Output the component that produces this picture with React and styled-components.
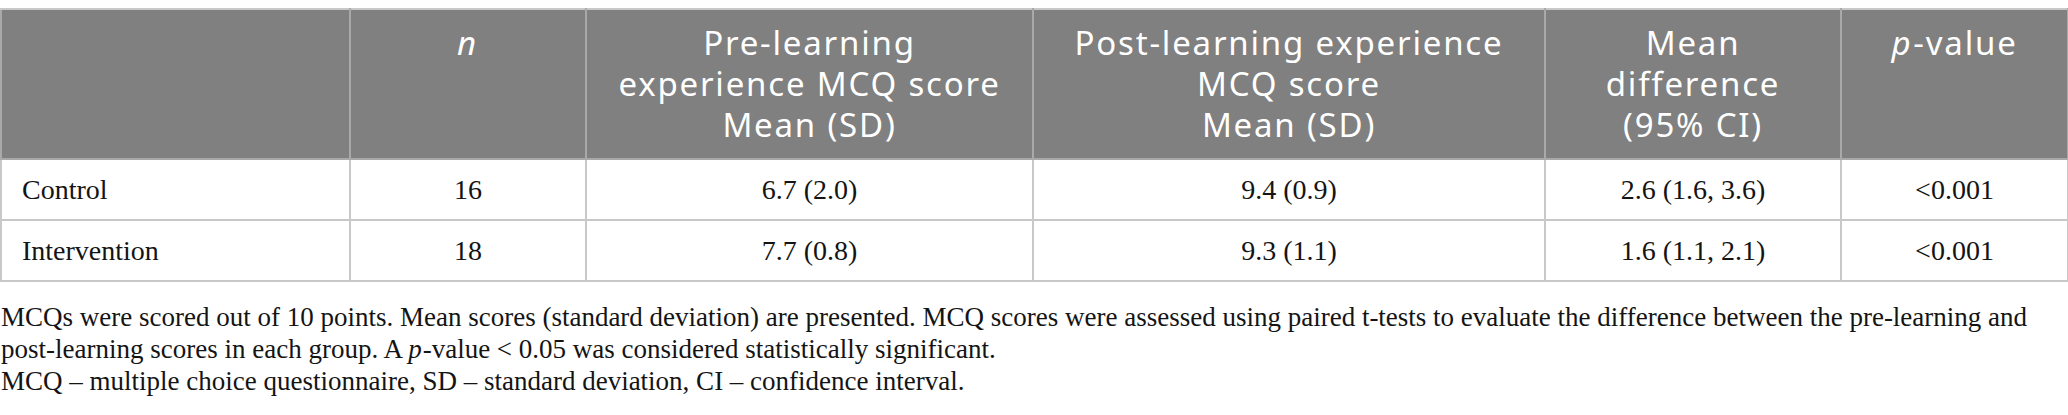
import React from "react"
import styled, { createGlobalStyle } from "styled-components"

const GlobalStyle = createGlobalStyle`
  body {
    margin: 0;
    background: #ffffff;
  }
`

const Wrapper = styled.div`
  width: 2067px;
  padding-top: 8px;
`

const Table = styled.table`
  width: 2067px;
  border-collapse: collapse;
  table-layout: fixed;
  border: 2px solid #c8c8c8;
`

const HeadCell = styled.th`
  background: #7f807f;
  color: #ffffff;
  font-family: "Noto Sans", "Open Sans", sans-serif;
  font-weight: 400;
  font-size: 33px;
  line-height: 41px;
  letter-spacing: 1.8px;
  text-align: center;
  vertical-align: top;
  padding: 12px 4px 0;
  height: 150px;
  box-sizing: border-box;
  border: 2px solid #a9a9a9;
  border-top-color: #c8c8c8;
`

const Cell = styled.td`
  font-family: "Liberation Serif", "Times New Roman", serif;
  font-size: 28px;
  color: #141414;
  text-align: ${(p) => (p.$left ? "left" : "center")};
  padding: 0 ${(p) => (p.$left ? "20px" : "8px")};
  height: 59px;
  vertical-align: middle;
  border: 2px solid #c8c8c8;
`

const Italic = styled.i`
  font-style: italic;
  padding-right: 1px;
`

const Footnote = styled.div`
  margin-top: 19px;
  padding-left: 1px;
  font-family: "Liberation Serif", "Times New Roman", serif;
  font-size: 27px;
  line-height: 32px;
  color: #141414;
  width: 2060px;

  p {
    margin: 0;
  }
`

const widths = [349, 236, 447, 512, 296, 227]

const rows = [
  ["Control", "16", "6.7 (2.0)", "9.4 (0.9)", "2.6 (1.6, 3.6)", "<0.001"],
  ["Intervention", "18", "7.7 (0.8)", "9.3 (1.1)", "1.6 (1.1, 2.1)", "<0.001"],
]

export default function App() {
  return (
    <Wrapper>
      <GlobalStyle />
      <Table>
        <colgroup>
          {widths.map((w, i) => (
            <col key={i} style={{ width: w }} />
          ))}
        </colgroup>
        <thead>
          <tr>
            <HeadCell />
            <HeadCell><Italic>n</Italic></HeadCell>
            <HeadCell>Pre-learning<br />experience MCQ score<br />Mean (SD)</HeadCell>
            <HeadCell>Post-learning experience<br />MCQ score<br />Mean (SD)</HeadCell>
            <HeadCell>Mean<br />difference<br />(95% CI)</HeadCell>
            <HeadCell><Italic>p</Italic>-value</HeadCell>
          </tr>
        </thead>
        <tbody>
          {rows.map((r) => (
            <tr key={r[0]}>
              {r.map((c, i) => (
                <Cell key={i} $left={i === 0}>{c}</Cell>
              ))}
            </tr>
          ))}
        </tbody>
      </Table>
      <Footnote>
        <p>
          MCQs were scored out of 10 points. Mean scores (standard deviation) are presented. MCQ scores were assessed using paired t-tests to evaluate the difference between the pre-learning and post-learning scores in each group. A <Italic>p</Italic>-value &lt; 0.05 was considered statistically significant.
        </p>
        <p>MCQ – multiple choice questionnaire, SD – standard deviation, CI – confidence interval.</p>
      </Footnote>
    </Wrapper>
  )
}
